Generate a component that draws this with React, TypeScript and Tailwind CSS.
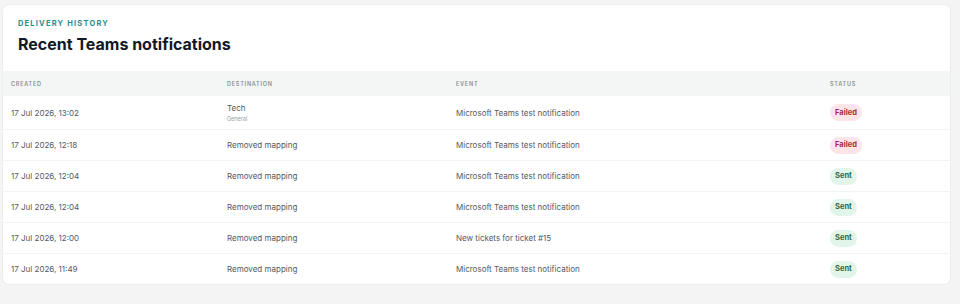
const rows = [
  { created: '17 Jul 2026, 13:02', dest: 'Tech', sub: 'General', event: 'Microsoft Teams test notification', status: 'Failed' },
  { created: '17 Jul 2026, 12:18', dest: 'Removed mapping', event: 'Microsoft Teams test notification', status: 'Failed' },
  { created: '17 Jul 2026, 12:04', dest: 'Removed mapping', event: 'Microsoft Teams test notification', status: 'Sent' },
  { created: '17 Jul 2026, 12:04', dest: 'Removed mapping', event: 'Microsoft Teams test notification', status: 'Sent' },
  { created: '17 Jul 2026, 12:00', dest: 'Removed mapping', event: 'New tickets for ticket #15', status: 'Sent' },
  { created: '17 Jul 2026, 11:49', dest: 'Removed mapping', event: 'Microsoft Teams test notification', status: 'Sent' },
];

function StatusBadge({ status }: { status: string }) {
  const failed = status === 'Failed';
  return (
    <span
      className={`inline-flex h-[17px] items-center rounded-full px-[5px] text-[7.5px] font-bold ${
        failed ? 'bg-[#fde4e7] text-[#a23141]' : 'bg-[#e2f5eb] text-[#2f6a4b]'
      }`}
    >
      {status}
    </span>
  );
}

export default function App() {
  return (
    <div
      className="h-[304px] w-[960px] bg-[#f3f4f3] pl-[3px] pr-[10px] pt-[5px]"
      style={{ fontFamily: 'Inter, "Noto Sans", sans-serif' }}
    >
      <section className="overflow-hidden rounded-md bg-white shadow-[0_0_0_1px_#eceeed]">
        <div className="px-[15px] pb-[17px] pt-[14px]">
          <p className="text-[7.5px] font-bold uppercase leading-[10px] tracking-[0.16em] text-[#2a8c8c]">
            Delivery history
          </p>
          <h2 className="mt-[5px] text-[16px] font-bold leading-[20px] text-[#111827]">
            Recent Teams notifications
          </h2>
        </div>
        <div className="grid h-[25px] grid-cols-[216px_229px_374px_1fr] items-center bg-[#f4f6f5] px-[8px] text-[5.5px] font-semibold uppercase leading-[8px] tracking-[0.14em] text-[#8a8f94]">
          <span>Created</span>
          <span>Destination</span>
          <span>Event</span>
          <span>Status</span>
        </div>
        {rows.map((r, i) => (
          <div
            key={i}
            className={`grid grid-cols-[216px_229px_374px_1fr] items-center px-[8px] text-[8px] text-[#54595f] ${
              i === 0 ? 'h-[33px]' : 'h-[31px] border-t border-[#f2f3f3]'
            }`}
          >
            <span>{r.created}</span>
            <span className="flex flex-col">
              <span>{r.dest}</span>
              {r.sub && <span className="mt-[1px] text-[5.5px] text-[#9aa0a6]">{r.sub}</span>}
            </span>
            <span>{r.event}</span>
            <span className="flex">
              <StatusBadge status={r.status} />
            </span>
          </div>
        ))}
      </section>
    </div>
  );
}
